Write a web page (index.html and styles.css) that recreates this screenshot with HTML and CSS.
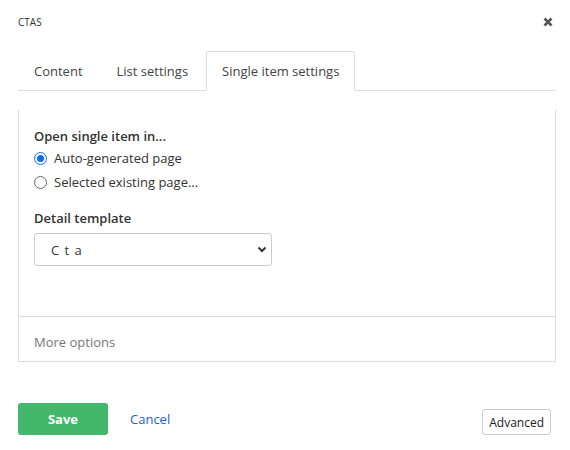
FILE: index.html
```html
<!DOCTYPE html>
<html>
<head>
<meta charset="utf-8">
<link rel="stylesheet" href="styles.css">
</head>
<body>
<div class="modal">
  <div class="header">
    <span class="title">CTAS</span>
    <span class="close" aria-label="close">
      <svg width="10" height="10" viewBox="0 0 10 10"><path d="M1.5 1.5 L8.5 8.5 M8.5 1.5 L1.5 8.5" stroke="#555" stroke-width="2.6" stroke-linecap="butt"/></svg>
    </span>
  </div>
  <ul class="tabs">
    <li class="tab">Content</li>
    <li class="tab">List settings</li>
    <li class="tab active">Single item settings</li>
  </ul>
  <div class="panel">
    <div class="panel-body">
      <div class="group-label">Open single item in...</div>
      <label class="radio"><span class="dot checked"></span>Auto-generated page</label>
      <label class="radio"><span class="dot"></span>Selected existing page...</label>
      <div class="group-label second">Detail template</div>
      <div class="select">
        <span class="select-text">C t a</span>
        <svg class="chev" width="10" height="7" viewBox="0 0 10 7"><path d="M1.5 1.5 L5 5 L8.5 1.5" fill="none" stroke="#333" stroke-width="2"/></svg>
      </div>
    </div>
    <div class="panel-footer">More options</div>
  </div>
  <div class="actions">
    <button class="save">Save</button>
    <a class="cancel">Cancel</a>
    <button class="advanced">Advanced</button>
  </div>
</div>
</body>
</html>
```

FILE: styles.css
```css
html, body {
  margin: 0;
  padding: 0;
  background: #fff;
}
body {
  font-family: "Open Sans", "Noto Sans", sans-serif;
  font-size: 13px;
  color: #333;
}
.modal {
  padding: 0 14px 0 18px;
}
.header {
  display: flex;
  justify-content: space-between;
  align-items: center;
  padding-top: 15px;
  height: 14px;
}
.title {
  font-size: 10px;
  line-height: 14px;
  color: #333;
}
.close {
  display: flex;
  margin-right: 3px;
}
.tabs {
  list-style: none;
  margin: 22px 0 0 0;
  padding: 0;
  display: flex;
  border-bottom: 1px solid #ddd;
}
.tab {
  padding: 10px 15px;
  line-height: 18px;
  margin-right: 2px;
  margin-bottom: -1px;
  border: 1px solid transparent;
  border-radius: 2px 2px 0 0;
  color: #444;
  font-size: 13px;
}
.tab.active {
  border-color: #ddd;
  border-bottom-color: #fff;
  background: #fff;
}
.panel {
  margin-top: 19px;
  border: 1px solid #ddd;
  border-top: none;
}
.panel-body {
  padding: 17px 15px 50px 15px;
}
.group-label {
  font-weight: 600;
  line-height: 18px;
  color: #333;
}
.group-label.second {
  margin-top: 18px;
}
.radio {
  display: flex;
  align-items: center;
  line-height: 18px;
  margin-top: 4px;
  color: #333;
}
.radio + .radio {
  margin-top: 6px;
}
.dot {
  width: 11px;
  height: 11px;
  border: 1px solid #666;
  border-radius: 50%;
  margin-right: 7px;
  box-sizing: content-box;
  position: relative;
}
.dot.checked {
  border-color: #0a6ef0;
  background: #fff;
}
.dot.checked::after {
  content: "";
  position: absolute;
  left: 2px;
  top: 2px;
  width: 7px;
  height: 7px;
  border-radius: 50%;
  background: #0a6ef0;
}
.select {
  margin-top: 6px;
  height: 31px;
  border: 1px solid #ccc;
  border-radius: 3px;
  display: flex;
  align-items: center;
  justify-content: space-between;
  padding: 0 4px 0 16px;
  box-sizing: content-box;
  width: 216px;
}
.select-text {
  letter-spacing: 1px;
  color: #333;
}
.chev {
  display: block;
}
.panel-footer {
  border-top: 1px solid #ddd;
  padding: 15px 15px 9px 15px;
  line-height: 20px;
  color: #777;
}
.actions {
  margin-top: 41px;
  display: flex;
  align-items: flex-end;
}
.save {
  width: 90px;
  height: 32px;
  border: none;
  border-radius: 3px;
  background: #43b86a;
  color: #fff;
  font-family: inherit;
  font-size: 13px;
  font-weight: 700;
  padding: 0;
}
.cancel {
  margin-left: 22px;
  color: #1a64c4;
  align-self: center;
  font-size: 13px;
}
.advanced {
  margin-left: auto;
  margin-right: 5px;
  height: 26px;
  padding: 0 6px;
  border: 1px solid #ccc;
  border-radius: 3px;
  background: #fff;
  color: #222;
  font-family: inherit;
  font-size: 12px;
}
```
